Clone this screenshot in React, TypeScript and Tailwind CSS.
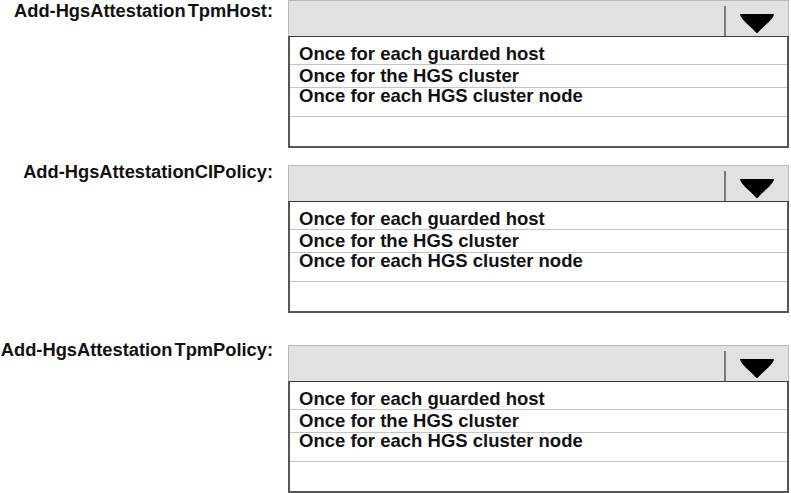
import React from "react";

const options = [
  "Once for each guarded host",
  "Once for the HGS cluster",
  "Once for each HGS cluster node",
];

function Arrow() {
  return (
    <svg width="34" height="19" viewBox="0 0 34 19" className="block">
      <path d="M0 0 H34 C33.5 5 25 11 17.5 19 H16.5 C9 11 0.5 5 0 0 Z" fill="#000" />
    </svg>
  );
}

function Block({
  first,
  second,
  labelOffset,
}: {
  first: string;
  second: string;
  labelOffset: string;
}) {
  return (
    <div className="flex items-start">
      <div
        className={`w-[273px] shrink-0 text-right text-[18.3px] leading-[20px] font-bold text-[#111] whitespace-nowrap ${labelOffset}`}
      >
        {first}
        {second ? <span className="ml-[2px]">{second}</span> : null}
      </div>
      <div className="ml-[15px] w-[501px] shrink-0">
        <div className="h-[36px] bg-[#e1e1e1] border-t border-l border-r border-[#b9b9b9] flex justify-end items-stretch">
          <div className="mt-[5px] w-[2px] bg-[#7a7a7a]" />
          <div className="w-[62px] flex justify-center pt-[13px]">
            <Arrow />
          </div>
        </div>
        <div className="h-[112px] border-t border-t-[#3a3a3a] border-l-2 border-r-2 border-b-2 border-[#555] bg-white text-[18.5px] font-bold text-[#111] whitespace-nowrap">
          <div className="h-[28px] border-b border-[#c4c4c4] pl-[9px] pt-[6px] leading-[22px]">
            {options[0]}
          </div>
          <div className="h-[23px] border-b border-[#c4c4c4] pl-[9px] leading-[22px]">
            {options[1]}
          </div>
          <div className="h-[29px] border-b border-[#c4c4c4] pl-[9px] leading-[16px]">
            {options[2]}
          </div>
        </div>
      </div>
    </div>
  );
}

export default function App() {
  return (
    <div
      className="w-[791px] h-[493px] bg-white overflow-hidden"
      style={{ fontFamily: '"Liberation Sans", Arial, sans-serif' }}
    >
      <div className="flex flex-col">
        <div>
          <Block first="Add-HgsAttestation" second="TpmHost:" labelOffset="mt-[1px]" />
        </div>
        <div className="mt-[17px]">
          <Block first="Add-HgsAttestationCIPolicy:" second="" labelOffset="-mt-[3px]" />
        </div>
        <div className="mt-[32px]">
          <Block first="Add-HgsAttestation" second="TpmPolicy:" labelOffset="-mt-[5px]" />
        </div>
      </div>
    </div>
  );
}
